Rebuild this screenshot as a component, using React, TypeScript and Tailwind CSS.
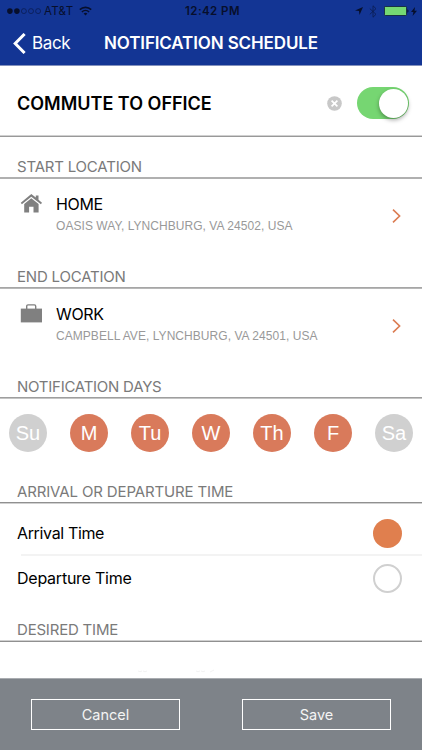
import type { ReactNode } from 'react'

const days = [
  { label: 'Su', active: false },
  { label: 'M', active: true },
  { label: 'Tu', active: true },
  { label: 'W', active: true },
  { label: 'Th', active: true },
  { label: 'F', active: true },
  { label: 'Sa', active: false },
]

function StatusBar() {
  return (
    <div className="relative flex h-[22px] items-center justify-between pl-[7px] pr-[5px] text-[#070f2c]">
      <div className="flex items-center">
        <svg width="35" height="7" viewBox="0 0 35 7">
          <circle cx="2.9" cy="3.1" r="2.8" fill="currentColor" />
          <circle cx="9.9" cy="3.1" r="2.8" fill="currentColor" />
          <g fill="none" stroke="currentColor" strokeWidth="0.6" opacity="0.8">
            <circle cx="16.9" cy="3.1" r="2.5" />
            <circle cx="24" cy="3.1" r="2.5" />
            <circle cx="31.1" cy="3.1" r="2.5" />
          </g>
        </svg>
        <span className="ml-[2px] pt-[1px] text-[11.5px] tracking-[0.3px]">AT&amp;T</span>
        <svg className="ml-[6px] mb-[1px]" width="13" height="10" viewBox="0 0 13 10">
          <g fill="none" stroke="currentColor" strokeWidth="1.6">
            <path d="M0.8 3.7a8.2 8.2 0 0 1 11.4 0" />
            <path d="M2.9 6a5.2 5.2 0 0 1 7.2 0" />
          </g>
          <path d="M6.5 9.6 4.6 7.6a2.8 2.8 0 0 1 3.8 0z" fill="currentColor" />
        </svg>
      </div>
      <span className="absolute inset-x-0 pl-[3px] pt-[1px] text-center text-[11.5px] font-semibold tracking-[0.45px]">
        12:42 PM
      </span>
      <div className="flex items-center">
        <svg width="8" height="8" viewBox="0 0 8 8">
          <path d="M8 0 4.5 8 4 4 0 3.5z" fill="currentColor" />
        </svg>
        <svg className="ml-[6px]" width="8" height="13" viewBox="0 0 8 13" fill="none" stroke="currentColor" strokeWidth="0.8" opacity="0.65">
          <path d="M0.8 3.6 7 9.3 4 12.2V0.8l3 2.9L0.8 9.3" />
        </svg>
        <svg className="ml-[7px]" width="25" height="10" viewBox="0 0 25 10">
          <rect x="0.4" y="0.4" width="22.2" height="9.2" rx="1.2" fill="#75d873" stroke="currentColor" strokeWidth="0.8" />
          <path d="M23.4 3.2a2 2 0 0 1 0 3.6z" fill="currentColor" />
        </svg>
        <svg className="ml-[2px]" width="6" height="9" viewBox="0 0 6 9">
          <path d="M4 0 0 5h2.4L1.6 9 6 3.7H3.5z" fill="currentColor" />
        </svg>
      </div>
    </div>
  )
}

function SectionHeader({ children, className }: { children: ReactNode; className: string }) {
  return (
    <h2 className={`flex items-end border-b pb-[1px] pl-[17px] text-[15px] leading-[20px] text-[#7a7a7a] ${className}`}>
      {children}
    </h2>
  )
}

interface LocationRowProps {
  icon: ReactNode
  name: string
  address: string
}

function LocationRow({ icon, name, address }: LocationRowProps) {
  return (
    <div className="flex h-[75px] pl-[20px] pr-[21px]">
      <div className="w-[36px] pt-[15px]">{icon}</div>
      <div className="flex-1 pt-[15px]">
        <p className="text-[16px] leading-[20px] tracking-[-0.35px] text-black">{name}</p>
        <p className="mt-[4px] font-['Liberation_Sans',sans-serif] text-[12px] leading-[16px] tracking-[0.05px] text-[#999]">
          {address}
        </p>
      </div>
      <svg className="mt-[30px]" width="9" height="14" viewBox="0 0 9 14" fill="none" stroke="#db7c52" strokeWidth="1.6">
        <path d="M1 0.7 7.6 7 1 13.3" />
      </svg>
    </div>
  )
}

export default function App() {
  return (
    <div className="flex h-[750px] w-[422px] flex-col overflow-hidden bg-white font-['Inter',sans-serif]">
      <header className="h-[66px] border-b border-[#8391bd] bg-[#133594]">
        <StatusBar />
        <div className="relative flex h-[43px] items-center pl-[13px] text-white">
          <svg width="13" height="21" viewBox="0 0 13 21" fill="none" stroke="currentColor" strokeWidth="3">
            <path d="M11.6 1 2.2 10.5l9.4 9.5" />
          </svg>
          <span className="ml-[6px] text-[17px] tracking-[-0.35px]">Back</span>
          <h1 className="absolute left-[104px] whitespace-nowrap text-[17px] font-semibold tracking-[-0.12px]">
            NOTIFICATION SCHEDULE
          </h1>
        </div>
      </header>

      <div className="flex h-[71px] items-center border-b border-[#999] pl-[17px] pr-[13px] pb-[1px] shadow-[inset_0_-1px_#d0d0d0]">
        <span className="flex-1 pt-[5px] text-[18px] font-semibold text-black">COMMUTE TO OFFICE</span>
        <svg className="mt-[5px]" width="15" height="15" viewBox="0 0 15 15">
          <circle cx="7.5" cy="7.5" r="7.3" fill="#c8c8c8" />
          <path d="m4.6 4.6 5.8 5.8m0-5.8-5.8 5.8" stroke="#fff" strokeWidth="1.7" />
        </svg>
        <div className="ml-[15px] mt-[5px] flex h-[32px] w-[52px] justify-end rounded-full bg-[#76d672] p-[1.5px]">
          <div className="size-[29px] rounded-full bg-white shadow-[0_2px_4px_rgba(0,0,0,0.35)]" />
        </div>
      </div>

      <SectionHeader className="h-[42px] border-[#b0b0b0] tracking-[-0.2px] shadow-[inset_0_-1px_#b0b0b0]">
        START LOCATION
      </SectionHeader>
      <LocationRow
        name="HOME"
        address="OASIS WAY, LYNCHBURG, VA 24502, USA"
        icon={
          <svg width="22" height="19" viewBox="0 0 22 19" fill="#808080">
            <path d="M11.3 0 15.8 3.6V1.5h2.7v4.3L22 8.7l-1.1 1.6-9.6-7.5-9.4 7.5L.8 8.7z" />
            <path d="M11.3 4.3l7.3 5.8v8.3h-5.1v-5.6H9.1v5.6H4.2v-8.3z" />
          </svg>
        }
      />
      <SectionHeader className="h-[35px] border-[#b8b8b8] tracking-[-0.2px] shadow-[inset_0_-1px_#a6a6a6]">
        END LOCATION
      </SectionHeader>
      <LocationRow
        name="WORK"
        address="CAMPBELL AVE, LYNCHBURG, VA 24501, USA"
        icon={
          <svg width="22" height="19" viewBox="0 0 22 19">
            <rect x="0.8" y="4.6" width="21.2" height="13.8" fill="#808080" />
            <path d="M6.7 5V2.2C6.7 1.3 7.2.9 8 .9h6.4c.8 0 1.3.4 1.3 1.3V5" fill="none" stroke="#808080" strokeWidth="1.4" />
          </svg>
        }
      />
      <SectionHeader className="h-[35px] border-[#c4c4c4] tracking-[-0.25px] shadow-[inset_0_-1px_#9e9e9e]">
        NOTIFICATION DAYS
      </SectionHeader>

      <div className="flex h-[68px] items-center justify-between px-[9px]">
        {days.map((day) => (
          <div
            key={day.label}
            className={`flex size-[38px] items-center justify-center rounded-full font-['Liberation_Sans',sans-serif] text-[20px] text-white ${
              day.active ? 'bg-[#d97a5b]' : 'bg-[#d0d0d0]'
            }`}
          >
            {day.label}
          </div>
        ))}
      </div>

      <SectionHeader className="h-[37px] border-[#d0d0d0] tracking-[-0.14px] shadow-[inset_0_-1px_#909090]">
        ARRIVAL OR DEPARTURE TIME
      </SectionHeader>
      <div className="flex h-[50px] items-center justify-between pl-[17px] pr-[20px] pt-[8px]">
        <span className="text-[16px] tracking-[-0.35px] text-black">Arrival Time</span>
        <span className="size-[29px] rounded-full bg-[#e07f4e]" />
      </div>
      <div className="ml-[21px] h-[2px] shrink-0 bg-[#f3f3f3]" />
      <div className="flex h-[44px] items-center justify-between pl-[17px] pr-[20px]">
        <span className="text-[16px] tracking-[-0.24px] text-black">Departure Time</span>
        <span className="size-[29px] rounded-full border-2 border-[#d0d0d0]" />
      </div>
      <SectionHeader className="h-[42px] border-[#909090] tracking-[-0.2px] shadow-[inset_0_-1px_#d0d0d0]">
        DESIRED TIME
      </SectionHeader>
      <div className="h-[36px] pl-[138px] pt-[27px]">
        {/* top edge of the time picker wheel */}
        <svg width="82" height="4" viewBox="0 0 82 4" fill="none" stroke="#f3f3f3">
          <path d="M0 2q2 1.5 4 0m1 0q2 1.5 4 0M58 2q2 1.5 4 0m1 0q2 1.5 4 0m5 1 4-2" />
        </svg>
      </div>

      <footer className="flex h-[72px] justify-between border-t border-[#a9acb0] bg-[#7e8389] px-[31px] pt-[20px]">
        <button className="h-[31px] w-[149px] border border-white text-[14.5px] text-[#f4f4f4]">Cancel</button>
        <button className="h-[31px] w-[149px] border border-white text-[14.5px] text-[#f4f4f4]">Save</button>
      </footer>
    </div>
  )
}
